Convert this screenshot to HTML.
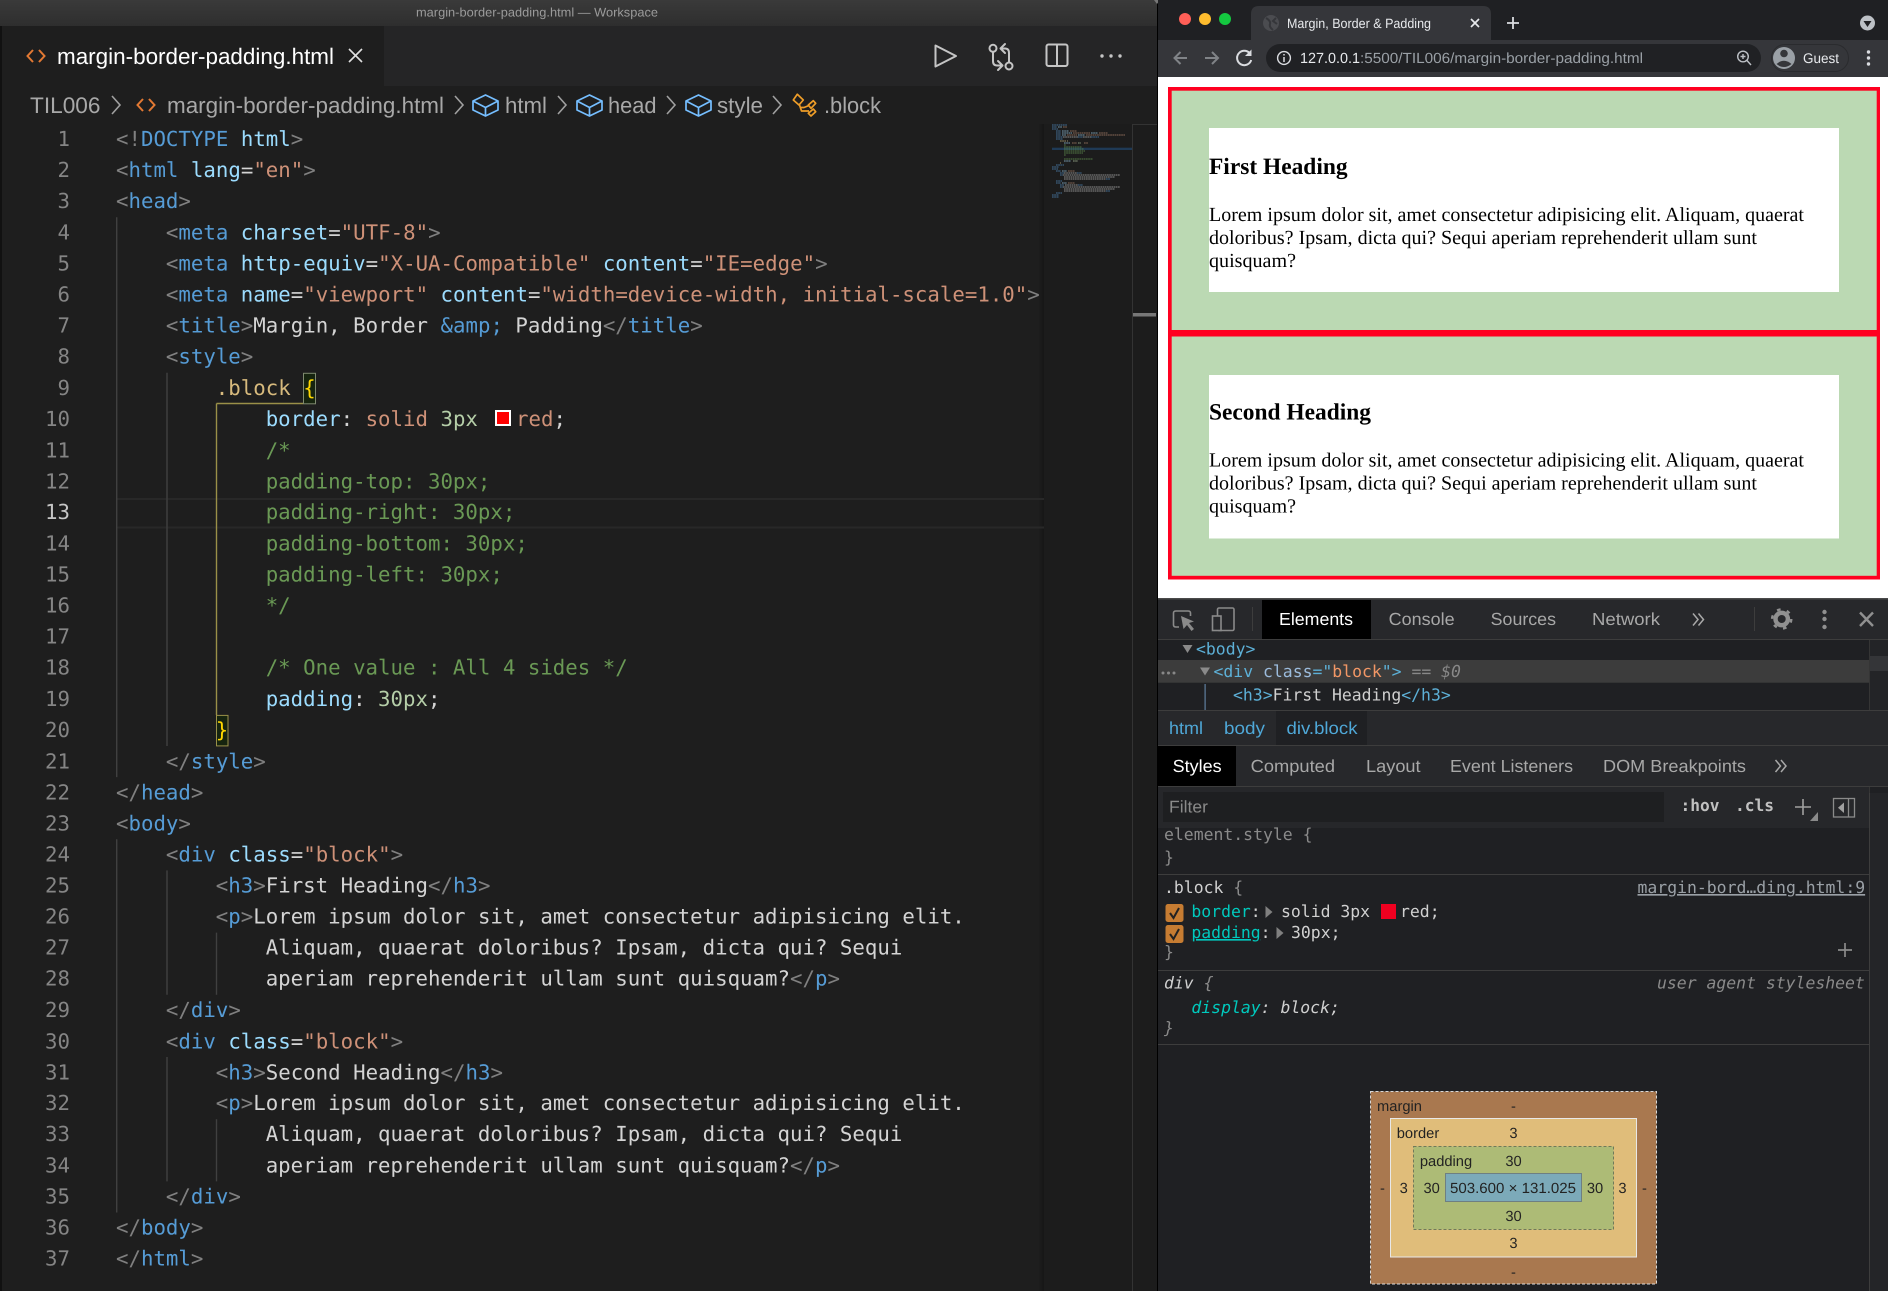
<!DOCTYPE html>
<html lang="en">
<head>
<meta charset="UTF-8">
<title>margin-border-padding.html</title>
<style>
html,body{margin:0;padding:0;background:#1e1e1e;width:1888px;height:1291px;overflow:hidden}
svg{display:block}
text{white-space:pre;text-rendering:geometricPrecision}
.c{font-family:"DejaVu Sans Mono","Liberation Mono",monospace;font-size:20.74px}
.ln{font-family:"DejaVu Sans Mono","Liberation Mono",monospace;font-size:20.74px;fill:#858585;text-anchor:end}
.s{font-family:"Liberation Sans",Arial,sans-serif}
.r{font-family:"Liberation Serif","Times New Roman",serif;fill:#000}
.d{font-family:"DejaVu Sans Mono","Liberation Mono",monospace;font-size:16.45px}
.a{fill:#808080}.t{fill:#569cd6}.n{fill:#9cdcfe}.v{fill:#ce9178}.x{fill:#d4d4d4}.g{fill:#6a9955}.y{fill:#d7ba7d}.m{fill:#b5cea8}.b{fill:#ffd700}
.bc{font-size:22.5px;fill:#a8a8a8}
.dt{font-size:17.5px;fill:#a8a8a8}
.bm{font-size:14.7px;fill:#222;text-anchor:middle}
.dg{fill:#5db0d7}
.gr{fill:#888}
.wt{fill:#d0d0d0}
.te{fill:#00c9bd}
</style>
</head>
<body>
<svg xmlns="http://www.w3.org/2000/svg" width="1888" height="1291" viewBox="0 0 1888 1291">
<defs>
<linearGradient id="tb" x1="0" y1="0" x2="0" y2="1"><stop offset="0" stop-color="#3a3a3a"/><stop offset="1" stop-color="#2e2e2e"/></linearGradient>
<linearGradient id="sh" x1="0" y1="0" x2="1" y2="0"><stop offset="0" stop-color="#000" stop-opacity="0"/><stop offset="1" stop-color="#000" stop-opacity=".25"/></linearGradient>
</defs>

<!-- VS Code -->
<rect x="0" y="0" width="1158" height="1291" fill="#1e1e1e"/>
<rect x="0" y="0" width="2" height="1291" fill="#111"/>
<rect x="0" y="0" width="1158" height="26" fill="url(#tb)"/>
<text class="s" x="416" y="16.5" font-size="12.5" fill="#9b9b9b" textLength="242" lengthAdjust="spacingAndGlyphs">margin-border-padding.html — Workspace</text>
<rect x="2" y="26" width="1156" height="60" fill="#252526"/>
<rect x="2" y="26" width="382" height="60" fill="#1e1e1e"/>
<path d="M33 50L27.5 56L33 62M39 50L44.5 56L39 62" fill="none" stroke="#e37933" stroke-width="2"/>
<text class="s" x="57" y="64" font-size="22.5" fill="#fff" textLength="277" lengthAdjust="spacingAndGlyphs">margin-border-padding.html</text>
<path d="M349 49L362 62M362 49L349 62" stroke="#e0e0e0" stroke-width="1.6" fill="none"/>
<path d="M935.5 45.5L956 56L935.5 66.5Z" fill="none" stroke="#c5c5c5" stroke-width="2" stroke-linejoin="round"/>
<g fill="none" stroke="#c5c5c5" stroke-width="2" stroke-linecap="round" stroke-linejoin="round">
<circle cx="993" cy="48.3" r="3.5"/><circle cx="1009" cy="66" r="3.5"/>
<path d="M1005 44L1000.5 48.5L1005 53M1001 48.5H1005Q1009 48.5 1009 53V62M993 52V61Q993 65.5 997 65.5H1002M998 61L1002.5 65.5L998 70"/>
<rect x="1046.5" y="44.5" width="21" height="21.5" rx="2"/><path d="M1057 44.5V66"/>
</g>
<g fill="#c5c5c5"><circle cx="1102" cy="56" r="1.7"/><circle cx="1111" cy="56" r="1.7"/><circle cx="1120" cy="56" r="1.7"/></g>

<!-- Breadcrumbs -->
<text class="s bc" x="30" y="113" textLength="70.5" lengthAdjust="spacingAndGlyphs">TIL006</text>
<g fill="none" stroke="#a0a0a0" stroke-width="1.6">
<path d="M112 96L120 105L112 114M455 96L463 105L455 114M558 96L566 105L558 114M667 96L675 105L667 114M773 96L781 105L773 114"/>
</g>
<path d="M143 99L137.5 105L143 111M149 99L154.5 105L149 111" fill="none" stroke="#e37933" stroke-width="2"/>
<text class="s bc" x="167" y="113" textLength="277" lengthAdjust="spacingAndGlyphs">margin-border-padding.html</text>
<g fill="none" stroke="#75beff" stroke-width="1.7" stroke-linejoin="round">
<path d="M485.5 95L498 101V110L485.5 116L473 110V101ZM473 101L485.5 107.5L498 101M485.5 107.5V116"/>
<path d="M589.5 95L602 101V110L589.5 116L577 110V101ZM577 101L589.5 107.5L602 101M589.5 107.5V116"/>
<path d="M698.5 95L711 101V110L698.5 116L686 110V101ZM686 101L698.5 107.5L711 101M698.5 107.5V116"/>
</g>
<text class="s bc" x="505" y="113" textLength="42" lengthAdjust="spacingAndGlyphs">html</text>
<text class="s bc" x="608" y="113" textLength="48.5" lengthAdjust="spacingAndGlyphs">head</text>
<text class="s bc" x="717" y="113" textLength="46" lengthAdjust="spacingAndGlyphs">style</text>
<g fill="none" stroke="#ee9d28" stroke-width="1.7" stroke-linejoin="round">
<path d="M793.3 100L797.3 94.3L803.3 100L799 105ZM808.3 105L813.3 100.7L815.7 103.3L811 108.3ZM808.3 113.3L813.3 109L815.7 111.7L811 116Z"/>
<path d="M799.5 105L801.5 111H809M801 107.5H804L809 105.5"/>
</g>
<text class="s bc" x="824" y="113" textLength="57" lengthAdjust="spacingAndGlyphs">.block</text>

<!-- Minimap / scroll region -->
<rect x="1044" y="124" width="114" height="1167" fill="#1c1c1c"/>
<rect x="1038" y="124" width="6" height="1167" fill="url(#sh)"/>
<rect x="1052" y="147.7" width="80" height="2.3" fill="#1f3a56"/>
<g fill="none" stroke-width="1" stroke-dasharray="1.7 .5" opacity=".8">
<path stroke="#4d86b8" d="M1052 125h15M1052 127h5M1052 129h6M1056 131h5M1056 133h5M1056 135h5M1056 137h7M1078 137h5M1091 137h8M1056 139h7M1056 165h8M1052 167h7M1052 169h6M1056 171h5M1060 173h4M1077 173h5M1060 175h3M1106 179h4M1056 181h6M1056 183h5M1060 185h4M1078 185h5M1060 187h3M1106 191h4M1056 193h6M1052 195h7M1052 197h7"/>
<path stroke="#8fbcd6" d="M1058 127h4M1062 131h7M1062 133h10M1091 133h7M1062 135h4M1078 135h7M1064 143h6M1064 161h7M1062 171h5M1062 183h5"/>
<path stroke="#a57d66" d="M1063 127h4M1070 131h7M1073 133h17M1099 133h9M1067 135h10M1086 135h39M1072 143h5M1084 143h4M1068 171h7M1068 183h7"/>
<path stroke="#a8a8a8" d="M1063 137h15M1083 137h8M1064 173h13M1063 175h57M1064 177h51M1064 179h42M1065 185h13M1063 187h57M1064 189h51M1064 191h42"/>
<path stroke="#b8a878" d="M1060 141h6M1060 163h1M1067 141h1"/>
<path stroke="#60904f" d="M1064 145h2M1064 147h18M1064 149h20M1064 151h21M1064 153h19M1064 155h2M1064 159h29"/>
<path stroke="#a8bc98" d="M1078 143h3M1073 161h5"/>
</g>
<rect x="1132" y="124" width="1" height="1167" fill="#333"/>
<rect x="1132" y="124" width="26" height="1" fill="#333"/>
<rect x="1133" y="313" width="23" height="3.5" fill="#777"/>

<!-- Active line + guides -->
<path d="M117 499H1044M117 527.5H1044" stroke="#282828" stroke-width="2" fill="none"/>
<g stroke="#404040" stroke-width="1.4" fill="none">
<path d="M116.7 217.3V777.1M167 372.8V746M116.7 839.3V1212.5M167 870.4V994.8M167 1057V1181.4M216.5 932.6V994.8M216.5 1119.2V1181.4"/>
</g>
<path d="M216.5 403.5V715M216.5 403.5H303" stroke="#9a9048" stroke-width="1.4" fill="none"/>
<rect x="303.5" y="373.3" width="12" height="30.5" fill="#16240f" stroke="#7f8a70" stroke-width="1"/>
<rect x="216.5" y="715.4" width="11.5" height="30.5" fill="#16240f" stroke="#9a9048" stroke-width="1"/>

<!-- Line numbers -->
<text class="ln" x="70" y="146">1</text>
<text class="ln" x="70" y="177.1">2</text>
<text class="ln" x="70" y="208.2">3</text>
<text class="ln" x="70" y="239.3">4</text>
<text class="ln" x="70" y="270.4">5</text>
<text class="ln" x="70" y="301.5">6</text>
<text class="ln" x="70" y="332.6">7</text>
<text class="ln" x="70" y="363.7">8</text>
<text class="ln" x="70" y="394.8">9</text>
<text class="ln" x="70" y="425.9">10</text>
<text class="ln" x="70" y="457.3">11</text>
<text class="ln" x="70" y="488.4">12</text>
<text class="ln" x="70" y="519.2" style="fill:#c6c6c6">13</text>
<text class="ln" x="70" y="550.3">14</text>
<text class="ln" x="70" y="581.4">15</text>
<text class="ln" x="70" y="612.5">16</text>
<text class="ln" x="70" y="643.6">17</text>
<text class="ln" x="70" y="674.7">18</text>
<text class="ln" x="70" y="705.8">19</text>
<text class="ln" x="70" y="736.9">20</text>
<text class="ln" x="70" y="768.4">21</text>
<text class="ln" x="70" y="799.5">22</text>
<text class="ln" x="70" y="830.6">23</text>
<text class="ln" x="70" y="861.3">24</text>
<text class="ln" x="70" y="892.4">25</text>
<text class="ln" x="70" y="923.5">26</text>
<text class="ln" x="70" y="954.6">27</text>
<text class="ln" x="70" y="985.7">28</text>
<text class="ln" x="70" y="1016.8">29</text>
<text class="ln" x="70" y="1048.3">30</text>
<text class="ln" x="70" y="1079.4">31</text>
<text class="ln" x="70" y="1110.1">32</text>
<text class="ln" x="70" y="1141.2">33</text>
<text class="ln" x="70" y="1172.3">34</text>
<text class="ln" x="70" y="1203.6">35</text>
<text class="ln" x="70" y="1234.5">36</text>
<text class="ln" x="70" y="1265.6">37</text>

<!-- Code -->
<text class="c" x="116" y="146"><tspan class="a">&lt;!</tspan><tspan class="t">DOCTYPE</tspan><tspan class="x"> </tspan><tspan class="n">html</tspan><tspan class="a">&gt;</tspan></text>
<text class="c" x="116" y="177.1"><tspan class="a">&lt;</tspan><tspan class="t">html</tspan><tspan class="x"> </tspan><tspan class="n">lang</tspan><tspan class="x">=</tspan><tspan class="v">"en"</tspan><tspan class="a">&gt;</tspan></text>
<text class="c" x="116" y="208.2"><tspan class="a">&lt;</tspan><tspan class="t">head</tspan><tspan class="a">&gt;</tspan></text>
<text class="c" x="165.9" y="239.3"><tspan class="a">&lt;</tspan><tspan class="t">meta</tspan><tspan class="x"> </tspan><tspan class="n">charset</tspan><tspan class="x">=</tspan><tspan class="v">"UTF-8"</tspan><tspan class="a">&gt;</tspan></text>
<text class="c" x="165.9" y="270.4"><tspan class="a">&lt;</tspan><tspan class="t">meta</tspan><tspan class="x"> </tspan><tspan class="n">http-equiv</tspan><tspan class="x">=</tspan><tspan class="v">"X-UA-Compatible"</tspan><tspan class="x"> </tspan><tspan class="n">content</tspan><tspan class="x">=</tspan><tspan class="v">"IE=edge"</tspan><tspan class="a">&gt;</tspan></text>
<text class="c" x="165.9" y="301.5"><tspan class="a">&lt;</tspan><tspan class="t">meta</tspan><tspan class="x"> </tspan><tspan class="n">name</tspan><tspan class="x">=</tspan><tspan class="v">"viewport"</tspan><tspan class="x"> </tspan><tspan class="n">content</tspan><tspan class="x">=</tspan><tspan class="v">"width=device-width, initial-scale=1.0"</tspan><tspan class="a">&gt;</tspan></text>
<text class="c" x="165.9" y="332.6"><tspan class="a">&lt;</tspan><tspan class="t">title</tspan><tspan class="a">&gt;</tspan><tspan class="x">Margin, Border </tspan><tspan class="t">&amp;amp;</tspan><tspan class="x"> Padding</tspan><tspan class="a">&lt;/</tspan><tspan class="t">title</tspan><tspan class="a">&gt;</tspan></text>
<text class="c" x="165.9" y="363.7"><tspan class="a">&lt;</tspan><tspan class="t">style</tspan><tspan class="a">&gt;</tspan></text>
<text class="c" x="215.8" y="394.8"><tspan class="y">.block</tspan><tspan class="x"> </tspan><tspan class="b">{</tspan></text>
<text class="c" x="265.7" y="425.9"><tspan class="n">border</tspan><tspan class="x">: </tspan><tspan class="v">solid</tspan><tspan class="x"> </tspan><tspan class="m">3px</tspan></text>
<rect x="496" y="411" width="14" height="14" fill="#f00" stroke="#fff" stroke-width="2"/>
<text class="c" x="516" y="425.9"><tspan class="v">red</tspan><tspan class="x">;</tspan></text>
<text class="c g" x="265.7" y="457.3">/*</text>
<text class="c g" x="265.7" y="488.4">padding-top: 30px;</text>
<text class="c g" x="265.7" y="519.2">padding-right: 30px;</text>
<text class="c g" x="265.7" y="550.3">padding-bottom: 30px;</text>
<text class="c g" x="265.7" y="581.4">padding-left: 30px;</text>
<text class="c g" x="265.7" y="612.5">*/</text>
<text class="c g" x="265.7" y="674.7">/* One value : All 4 sides */</text>
<text class="c" x="265.7" y="705.8"><tspan class="n">padding</tspan><tspan class="x">: </tspan><tspan class="m">30px</tspan><tspan class="x">;</tspan></text>
<text class="c b" x="215.8" y="736.9">}</text>
<text class="c" x="165.9" y="768.4"><tspan class="a">&lt;/</tspan><tspan class="t">style</tspan><tspan class="a">&gt;</tspan></text>
<text class="c" x="116" y="799.5"><tspan class="a">&lt;/</tspan><tspan class="t">head</tspan><tspan class="a">&gt;</tspan></text>
<text class="c" x="116" y="830.6"><tspan class="a">&lt;</tspan><tspan class="t">body</tspan><tspan class="a">&gt;</tspan></text>
<text class="c" x="165.9" y="861.3"><tspan class="a">&lt;</tspan><tspan class="t">div</tspan><tspan class="x"> </tspan><tspan class="n">class</tspan><tspan class="x">=</tspan><tspan class="v">"block"</tspan><tspan class="a">&gt;</tspan></text>
<text class="c" x="215.8" y="892.4"><tspan class="a">&lt;</tspan><tspan class="t">h3</tspan><tspan class="a">&gt;</tspan><tspan class="x">First Heading</tspan><tspan class="a">&lt;/</tspan><tspan class="t">h3</tspan><tspan class="a">&gt;</tspan></text>
<text class="c" x="215.8" y="923.5"><tspan class="a">&lt;</tspan><tspan class="t">p</tspan><tspan class="a">&gt;</tspan><tspan class="x">Lorem ipsum dolor sit, amet consectetur adipisicing elit.</tspan></text>
<text class="c x" x="265.7" y="954.6">Aliquam, quaerat doloribus? Ipsam, dicta qui? Sequi</text>
<text class="c" x="265.7" y="985.7"><tspan class="x">aperiam reprehenderit ullam sunt quisquam?</tspan><tspan class="a">&lt;/</tspan><tspan class="t">p</tspan><tspan class="a">&gt;</tspan></text>
<text class="c" x="165.9" y="1016.8"><tspan class="a">&lt;/</tspan><tspan class="t">div</tspan><tspan class="a">&gt;</tspan></text>
<text class="c" x="165.9" y="1048.3"><tspan class="a">&lt;</tspan><tspan class="t">div</tspan><tspan class="x"> </tspan><tspan class="n">class</tspan><tspan class="x">=</tspan><tspan class="v">"block"</tspan><tspan class="a">&gt;</tspan></text>
<text class="c" x="215.8" y="1079.4"><tspan class="a">&lt;</tspan><tspan class="t">h3</tspan><tspan class="a">&gt;</tspan><tspan class="x">Second Heading</tspan><tspan class="a">&lt;/</tspan><tspan class="t">h3</tspan><tspan class="a">&gt;</tspan></text>
<text class="c" x="215.8" y="1110.1"><tspan class="a">&lt;</tspan><tspan class="t">p</tspan><tspan class="a">&gt;</tspan><tspan class="x">Lorem ipsum dolor sit, amet consectetur adipisicing elit.</tspan></text>
<text class="c x" x="265.7" y="1141.2">Aliquam, quaerat doloribus? Ipsam, dicta qui? Sequi</text>
<text class="c" x="265.7" y="1172.3"><tspan class="x">aperiam reprehenderit ullam sunt quisquam?</tspan><tspan class="a">&lt;/</tspan><tspan class="t">p</tspan><tspan class="a">&gt;</tspan></text>
<text class="c" x="165.9" y="1203.6"><tspan class="a">&lt;/</tspan><tspan class="t">div</tspan><tspan class="a">&gt;</tspan></text>
<text class="c" x="116" y="1234.5"><tspan class="a">&lt;/</tspan><tspan class="t">body</tspan><tspan class="a">&gt;</tspan></text>
<text class="c" x="116" y="1265.6"><tspan class="a">&lt;/</tspan><tspan class="t">html</tspan><tspan class="a">&gt;</tspan></text>

<!-- Browser chrome -->
<rect x="1157" y="0" width="1" height="1291" fill="#000"/>
<path d="M1154 0H1160L1157 4Z" fill="#777"/>
<rect x="1158" y="0" width="730" height="40" fill="#1f2023"/>
<path d="M1251 40V14Q1251 6 1259 6H1483Q1491 6 1491 14V40Z" fill="#35363a"/>
<circle cx="1185" cy="19" r="6" fill="#ff5f57"/><circle cx="1205" cy="19" r="6" fill="#febc2e"/><circle cx="1225" cy="19" r="6" fill="#14c840"/>
<circle cx="1271" cy="23" r="8" fill="#4b4c50"/><path d="M1266 18Q1271 21 1270 24T1273 30M1276 18L1273 21L1277 24" stroke="#35363a" stroke-width="2" fill="none"/>
<text class="s" x="1287" y="28" font-size="13.5" fill="#e8eaed" textLength="144" lengthAdjust="spacingAndGlyphs">Margin, Border &amp; Padding</text>
<path d="M1471 19L1479 27M1479 19L1471 27" stroke="#e8eaed" stroke-width="1.7" fill="none"/>
<path d="M1513 17V29M1507 23H1519" stroke="#dadce0" stroke-width="1.8" fill="none"/>
<circle cx="1867.5" cy="23" r="7.5" fill="#bdc1c6"/><path d="M1863.5 21H1871.5L1867.5 27Z" fill="#202124"/>
<rect x="1158" y="40" width="730" height="37" fill="#35363a"/>
<g fill="none" stroke-width="2">
<path d="M1187 58H1174.5M1180.5 52L1174.5 58L1180.5 64M1205 58H1218M1212 52L1218 58L1212 64" stroke="#808387"/>
<path d="M1249.5 53A7.2 7.2 0 1 0 1251.2 60" stroke="#dadce0"/>
</g>
<path d="M1251.5 49.5V56H1245Z" fill="#dadce0"/>
<rect x="1266" y="44" width="495" height="28" rx="14" fill="#202124"/>
<circle cx="1284" cy="58" r="6.4" fill="none" stroke="#dadce0" stroke-width="1.4"/>
<path d="M1284 57V62M1284 54V55.5" stroke="#dadce0" stroke-width="1.5" fill="none"/>
<text class="s" x="1300" y="63" font-size="14.7" fill="#e8eaed" textLength="60" lengthAdjust="spacingAndGlyphs">127.0.0.1</text>
<text class="s" x="1360" y="63" font-size="14.7" fill="#9aa0a6" textLength="283" lengthAdjust="spacingAndGlyphs">:5500/TIL006/margin-border-padding.html</text>
<g fill="none" stroke="#bdc1c6" stroke-width="1.4"><circle cx="1743" cy="56.5" r="5.3"/><path d="M1747 60.5L1751 65M1743 54V59M1740.5 56.5H1745.5"/></g>
<rect x="1771.5" y="44.5" width="77" height="27" rx="13.5" fill="#35363a" stroke="#2a2b2e"/>
<circle cx="1784" cy="58" r="11" fill="#9aa0a6"/>
<circle cx="1784" cy="53.5" r="3.8" fill="#35363a"/><path d="M1776.5 64Q1784 57.5 1791.5 64Q1784 70 1776.5 64Z" fill="#35363a"/>
<text class="s" x="1803" y="63" font-size="14" fill="#e8eaed" textLength="36" lengthAdjust="spacingAndGlyphs">Guest</text>
<g fill="#dadce0"><circle cx="1868.5" cy="52" r="1.7"/><circle cx="1868.5" cy="58" r="1.7"/><circle cx="1868.5" cy="64" r="1.7"/></g>

<!-- Page -->
<rect x="1158" y="77" width="730" height="521" fill="#fff"/>
<rect x="1168" y="87" width="712" height="492.5" fill="#ff0020"/>
<rect x="1171.7" y="90.7" width="705" height="239.3" fill="#bbd9b3"/>
<rect x="1171.7" y="336.5" width="705" height="239.3" fill="#bbd9b3"/>
<rect x="1209" y="128" width="630" height="164" fill="#fff"/>
<rect x="1209" y="375" width="630" height="163.5" fill="#fff"/>
<text class="r" x="1209" y="174" font-size="23.4" font-weight="700" textLength="138.6" lengthAdjust="spacingAndGlyphs">First Heading</text>
<text class="r" x="1209" y="221" font-size="20" textLength="595" lengthAdjust="spacingAndGlyphs">Lorem ipsum dolor sit, amet consectetur adipisicing elit. Aliquam, quaerat</text>
<text class="r" x="1209" y="244" font-size="20" textLength="548" lengthAdjust="spacingAndGlyphs">doloribus? Ipsam, dicta qui? Sequi aperiam reprehenderit ullam sunt</text>
<text class="r" x="1209" y="267" font-size="20" textLength="87" lengthAdjust="spacingAndGlyphs">quisquam?</text>
<text class="r" x="1209" y="419.5" font-size="23.4" font-weight="700" textLength="162" lengthAdjust="spacingAndGlyphs">Second Heading</text>
<text class="r" x="1209" y="466.5" font-size="20" textLength="595" lengthAdjust="spacingAndGlyphs">Lorem ipsum dolor sit, amet consectetur adipisicing elit. Aliquam, quaerat</text>
<text class="r" x="1209" y="489.5" font-size="20" textLength="548" lengthAdjust="spacingAndGlyphs">doloribus? Ipsam, dicta qui? Sequi aperiam reprehenderit ullam sunt</text>
<text class="r" x="1209" y="512.5" font-size="20" textLength="87" lengthAdjust="spacingAndGlyphs">quisquam?</text>

<!-- DevTools -->
<rect x="1158" y="598" width="730" height="693" fill="#1f2023"/>
<rect x="1158" y="598" width="730" height="41" fill="#27282b"/>
<rect x="1158" y="598" width="730" height="1.5" fill="#4a4a4a"/>
<rect x="1158" y="639" width="730" height="1" fill="#3d3d3d"/>
<g fill="none" stroke="#8a8a8a" stroke-width="1.6">
<path d="M1179 627H1176Q1173.5 627 1173.5 625V613Q1173.5 611 1176 611H1188Q1190.5 611 1190.5 613V616"/>
<rect x="1217.5" y="608" width="16.5" height="22.5" rx="1.5"/>
</g>
<path d="M1181 616L1194 621.5L1189 623L1194 629L1191.5 631L1187 625L1183.5 629Z" fill="#8a8a8a"/>
<rect x="1212.5" y="616" width="8.5" height="14.5" fill="#27282b" stroke="#8a8a8a" stroke-width="1.6"/>
<rect x="1252" y="607" width="1" height="24" fill="#3d3d3d"/>
<rect x="1262" y="600" width="109" height="39" fill="#000"/>
<text class="s dt" x="1279" y="625" style="fill:#fff" textLength="74" lengthAdjust="spacingAndGlyphs">Elements</text>
<text class="s dt" x="1388.6" y="625" textLength="66" lengthAdjust="spacingAndGlyphs">Console</text>
<text class="s dt" x="1490.7" y="625" textLength="65.3" lengthAdjust="spacingAndGlyphs">Sources</text>
<text class="s dt" x="1592" y="625" textLength="68" lengthAdjust="spacingAndGlyphs">Network</text>
<path d="M1693 613.5L1698 619.5L1693 625.5M1698.5 613.5L1703.5 619.5L1698.5 625.5" fill="none" stroke="#a8a8a8" stroke-width="1.5"/>
<rect x="1754" y="607" width="1" height="24" fill="#3d3d3d"/>
<circle cx="1781.7" cy="619" r="6.2" fill="none" stroke="#909090" stroke-width="4.4"/>
<circle cx="1781.7" cy="619" r="9.6" fill="none" stroke="#909090" stroke-width="2.4" stroke-dasharray="3.6 6.45"/>
<g fill="#909090"><circle cx="1824.5" cy="612" r="2.2"/><circle cx="1824.5" cy="619" r="2.2"/><circle cx="1824.5" cy="627" r="2.2"/></g>
<path d="M1860 612.5L1873 626M1873 612.5L1860 626" stroke="#909090" stroke-width="2.4" fill="none"/>

<rect x="1158" y="660" width="711" height="22.7" fill="#3c3c3c"/>
<path d="M1182.5 645H1192.5L1187.5 653Z" fill="#8a8a8a"/>
<path d="M1200 667.5H1210L1205 675.5Z" fill="#8a8a8a"/>
<text class="d dg" x="1196" y="654.5">&lt;body&gt;</text>
<g fill="#888"><circle cx="1163" cy="673" r="1.5"/><circle cx="1168.5" cy="673" r="1.5"/><circle cx="1174" cy="673" r="1.5"/></g>
<text class="d" x="1213.5" y="677"><tspan class="dg">&lt;div</tspan><tspan> </tspan><tspan fill="#9bbbdc">class</tspan><tspan class="dg">="</tspan><tspan fill="#f29766">block</tspan><tspan class="dg">"&gt;</tspan><tspan fill="#888"> == </tspan><tspan fill="#888" font-style="italic">$0</tspan></text>
<rect x="1204.5" y="684" width="1.2" height="26" fill="#5f7f9f"/>
<text class="d" x="1233" y="700.5"><tspan class="dg">&lt;h3&gt;</tspan><tspan class="wt">First Heading</tspan><tspan class="dg">&lt;/h3&gt;</tspan></text>
<rect x="1869" y="640" width="19" height="70" fill="#232427"/>
<rect x="1869" y="656" width="19" height="15" fill="#343538"/>
<rect x="1869" y="640" width="1" height="651" fill="#353535"/>

<rect x="1158" y="710" width="730" height="36" fill="#27282b"/>
<rect x="1158" y="710" width="730" height="1" fill="#3d3d3d"/>
<rect x="1158" y="745" width="730" height="1" fill="#3d3d3d"/>
<rect x="1276" y="711" width="91" height="34" fill="#1f2023"/>
<text class="s" x="1169" y="734" font-size="17.5" fill="#4fa8d8" textLength="34" lengthAdjust="spacingAndGlyphs">html</text>
<text class="s" x="1224" y="734" font-size="17.5" fill="#4fa8d8" textLength="41" lengthAdjust="spacingAndGlyphs">body</text>
<text class="s" x="1286.5" y="734" font-size="17.5" fill="#4fa8d8" textLength="71" lengthAdjust="spacingAndGlyphs">div.block</text>

<rect x="1158" y="746" width="730" height="40" fill="#27282b"/>
<rect x="1158" y="746" width="78" height="40" fill="#000"/>
<rect x="1158" y="786" width="730" height="1" fill="#3d3d3d"/>
<text class="s dt" x="1172.6" y="772" style="fill:#fff" textLength="49" lengthAdjust="spacingAndGlyphs">Styles</text>
<text class="s dt" x="1250.7" y="772" textLength="84.3" lengthAdjust="spacingAndGlyphs">Computed</text>
<text class="s dt" x="1366" y="772" textLength="54.6" lengthAdjust="spacingAndGlyphs">Layout</text>
<text class="s dt" x="1450" y="772" textLength="123" lengthAdjust="spacingAndGlyphs">Event Listeners</text>
<text class="s dt" x="1603" y="772" textLength="143" lengthAdjust="spacingAndGlyphs">DOM Breakpoints</text>
<path d="M1775.5 760L1780.5 766L1775.5 772M1781 760L1786 766L1781 772" fill="none" stroke="#a8a8a8" stroke-width="1.5"/>

<rect x="1158" y="787" width="711" height="41" fill="#26272a"/>
<rect x="1163" y="792" width="501" height="30" fill="#1e1f21"/>
<text class="s" x="1169" y="812.5" font-size="17" fill="#8a8a8a" textLength="39" lengthAdjust="spacingAndGlyphs">Filter</text>
<text class="d" x="1680.5" y="811" fill="#c0c0c0" font-weight="700" textLength="39" lengthAdjust="spacingAndGlyphs">:hov</text>
<text class="d" x="1735" y="811" fill="#c0c0c0" font-weight="700" textLength="39" lengthAdjust="spacingAndGlyphs">.cls</text>
<path d="M1803 799V815M1795 807H1811" stroke="#a0a0a0" stroke-width="1.6" fill="none"/>
<path d="M1818 812V821H1810Z" fill="#8a8a8a"/>
<rect x="1833.5" y="798.5" width="21" height="18.5" fill="none" stroke="#8a8a8a" stroke-width="1.3"/>
<path d="M1848.5 798.5V817" stroke="#8a8a8a" stroke-width="1.3"/>
<path d="M1844 802.5V813L1838 807.7Z" fill="#a0a0a0"/>
<rect x="1869" y="793" width="19" height="498" fill="#242528"/>
<rect x="1869" y="793" width="1" height="498" fill="#3d3d3d"/>

<text class="d" x="1164" y="840" fill="#8a8a8a">element.style <tspan>{</tspan></text>
<text class="d" x="1164" y="863" fill="#8a8a8a">}</text>
<rect x="1158" y="874" width="711" height="1" fill="#3d3d3d"/>
<text class="d" x="1164" y="893" fill="#d0d0d0">.block <tspan fill="#8a8a8a">{</tspan></text>
<text class="d" x="1637.5" y="893" fill="#9aa0a6" text-decoration="underline">margin-bord…ding.html:9</text>
<rect x="1165.5" y="904" width="18" height="18" rx="2.5" fill="#c67c32"/>
<path d="M1170 913L1173.5 918L1179 908" fill="none" stroke="#222" stroke-width="2"/>
<text class="d" x="1191.4" y="917"><tspan class="te">border</tspan><tspan class="wt">:</tspan></text>
<path d="M1265.5 906L1272.5 912L1265.5 918Z" fill="#808080"/>
<text class="d wt" x="1281" y="917">solid 3px</text>
<rect x="1381" y="904" width="15" height="15" fill="#f00020"/>
<text class="d wt" x="1400" y="917">red;</text>
<rect x="1165.5" y="925" width="18" height="18" rx="2.5" fill="#c67c32"/>
<path d="M1170 934L1173.5 939L1179 929" fill="none" stroke="#222" stroke-width="2"/>
<text class="d" x="1191.4" y="938"><tspan class="te" text-decoration="underline">padding</tspan><tspan class="wt">:</tspan></text>
<path d="M1276.5 927L1283.5 933L1276.5 939Z" fill="#808080"/>
<text class="d wt" x="1291" y="938">30px;</text>
<text class="d" x="1164" y="957.5" fill="#8a8a8a">}</text>
<path d="M1845 943V957M1838 950H1852" stroke="#8a8a8a" stroke-width="1.7" fill="none"/>
<rect x="1158" y="970" width="711" height="1" fill="#3d3d3d"/>
<text class="d" x="1164" y="988.5" font-style="italic" fill="#d0d0d0">div <tspan fill="#8a8a8a">{</tspan></text>
<text class="d" x="1657" y="988.5" font-style="italic" fill="#8a8a8a">user agent stylesheet</text>
<text class="d" x="1191.4" y="1013" font-style="italic"><tspan class="te">display</tspan><tspan class="wt">: block;</tspan></text>
<text class="d" x="1164" y="1033.5" font-style="italic" fill="#8a8a8a">}</text>
<rect x="1158" y="1044" width="711" height="1" fill="#3d3d3d"/>

<!-- Box model -->
<rect x="1370.5" y="1091.5" width="286" height="192.5" fill="#a9784f" stroke="#d8d8d8" stroke-width="1" stroke-dasharray="3 2"/>
<rect x="1390.5" y="1118.5" width="246" height="138.5" fill="#e0bd7a" stroke="#e8e8e8" stroke-width="1"/>
<rect x="1413.5" y="1146.5" width="200" height="83" fill="#adbb76" stroke="#6f7a5a" stroke-width="1" stroke-dasharray="3 2"/>
<rect x="1445.5" y="1173.5" width="136" height="28" fill="#7caab9" stroke="#6e7f82" stroke-width="1"/>
<text class="s bm" x="1399.5" y="1111">margin</text>
<text class="s bm" x="1513.5" y="1111">-</text>
<text class="s bm" x="1418" y="1138">border</text>
<text class="s bm" x="1513.5" y="1138">3</text>
<text class="s bm" x="1446" y="1166">padding</text>
<text class="s bm" x="1513.5" y="1166">30</text>
<text class="s bm" x="1382.5" y="1193">-</text>
<text class="s bm" x="1403.7" y="1193">3</text>
<text class="s bm" x="1431.7" y="1193">30</text>
<text class="s bm" x="1513" y="1193" textLength="126" lengthAdjust="spacingAndGlyphs">503.600 × 131.025</text>
<text class="s bm" x="1595" y="1193">30</text>
<text class="s bm" x="1622.5" y="1193">3</text>
<text class="s bm" x="1644.5" y="1193">-</text>
<text class="s bm" x="1513.5" y="1221">30</text>
<text class="s bm" x="1513.5" y="1248">3</text>
<text class="s bm" x="1513.5" y="1277">-</text>
</svg>
</body>
</html>
